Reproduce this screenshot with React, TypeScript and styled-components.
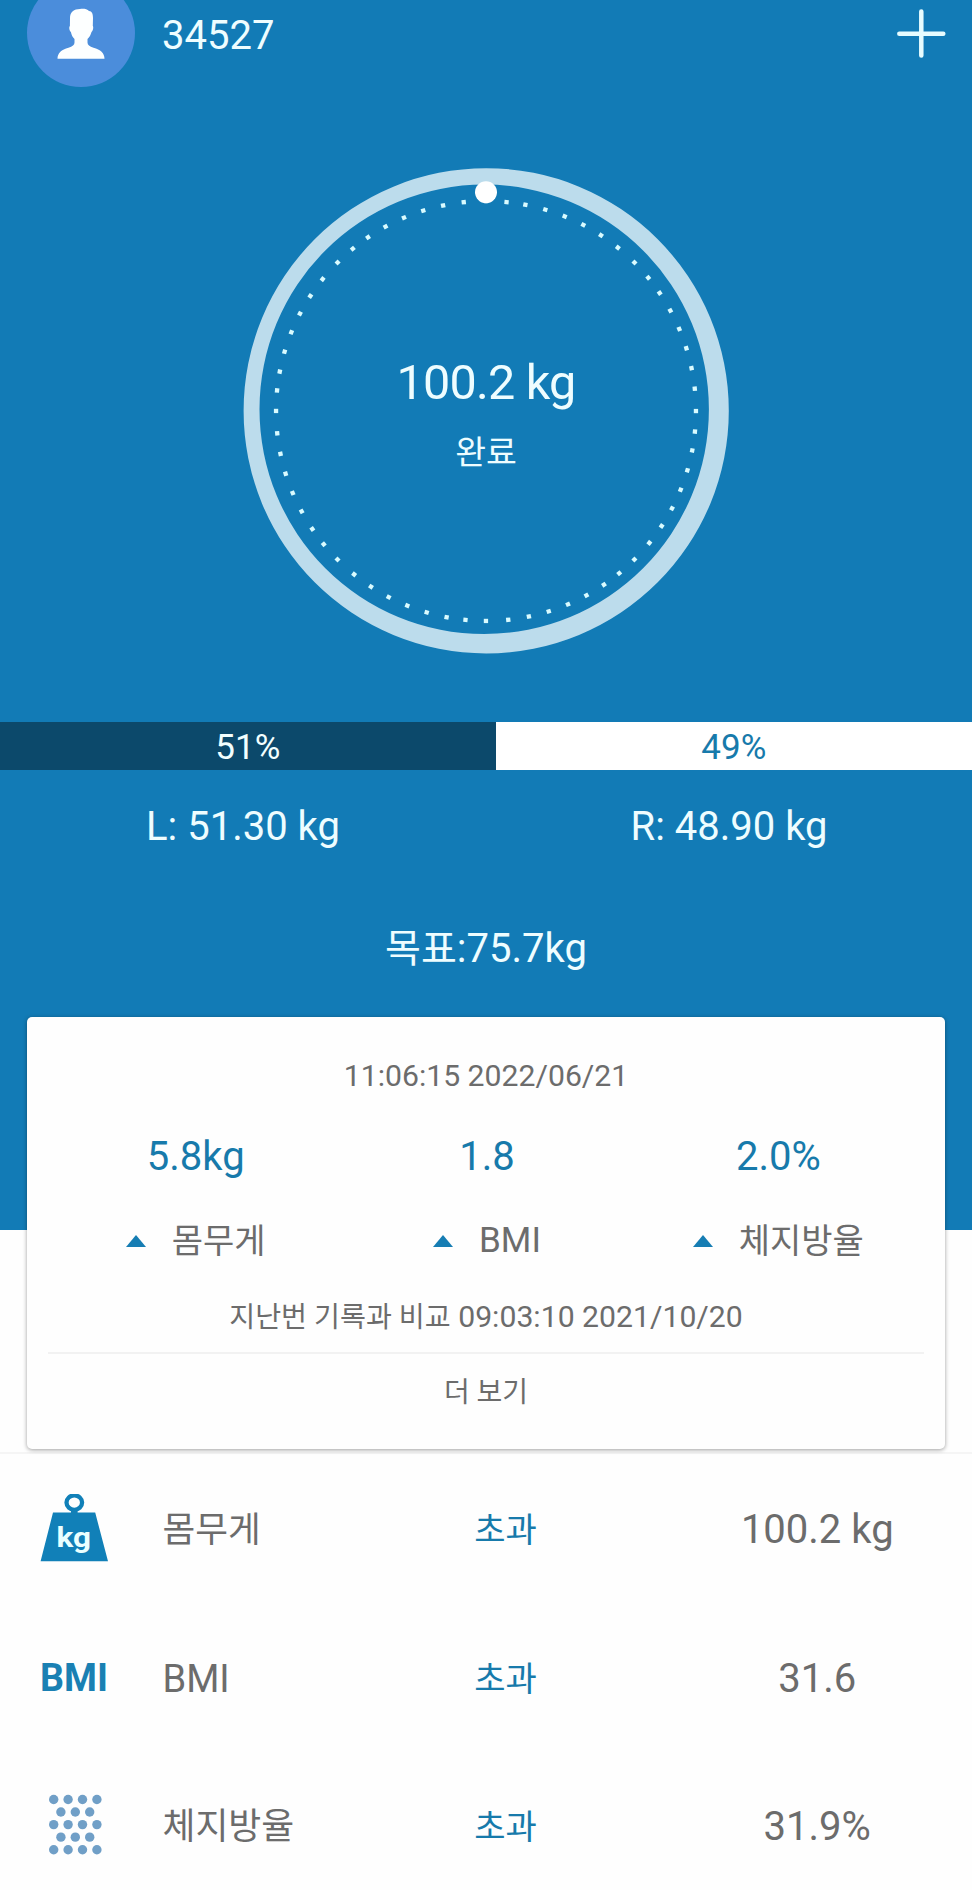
import React from "react";
import styled, { createGlobalStyle } from "styled-components";

const blue = "#127bb6";
const textBlue = "#177aab";
const grey = "#6c6c6c";

const GlobalStyle = createGlobalStyle`
  * { box-sizing: border-box; }
  body {
    margin: 0;
    background: #fefefe;
    font-family: Roboto, "Noto Sans CJK KR", sans-serif;
  }
`;

const Page = styled.main`
  width: 972px;
  height: 1890px;
  overflow: hidden;
`;

const Hero = styled.section`
  height: 1230px;
  background: ${blue};
  color: #eefdff;
  overflow: hidden;
`;

const Header = styled.header`
  display: flex;
  align-items: center;
  height: 108px;
  margin-top: -21px;
  padding: 0 26px 0 27px;
`;

const Avatar = styled.svg`
  width: 108px;
  height: 108px;
`;

const UserName = styled.span`
  flex: 1;
  padding: 6px 0 0 27px;
  font-size: 40px;
  line-height: 50px;
`;

const AddIcon = styled.svg`
  width: 50px;
  height: 50px;
`;

const Gauge = styled.div`
  display: grid;
  justify-content: center;
  margin-top: 81px;
  > * { grid-area: 1 / 1; }
`;

const Dial = styled.svg`
  width: 486px;
  height: 486px;
`;

const Readout = styled.div`
  display: flex;
  flex-direction: column;
  align-items: center;
  padding-top: 185px;
`;

const Weight = styled.span`
  font-size: 48.5px;
  letter-spacing: -0.8px;
  line-height: 60px;
`;

const State = styled.span`
  margin-top: 20px;
  font-size: 33.5px;
  line-height: 40px;
`;

const BalanceBar = styled.div`
  display: flex;
  height: 47.5px;
  margin-top: 68px;
  font-size: 35px;
  line-height: 52px;
  text-align: center;
`;

const BalanceSide = styled.div<{ $share: number; $dark?: boolean }>`
  flex: ${(p) => p.$share};
  background: ${(p) => (p.$dark ? "#0c496b" : "#fff")};
  color: ${(p) => (p.$dark ? "#f2ffff" : textBlue)};
`;

const Sides = styled.div`
  display: grid;
  grid-template-columns: 1fr 1fr;
  margin-top: 32px;
  font-size: 40px;
  line-height: 50px;
  text-align: center;
`;

const Goal = styled.div`
  margin-top: 72px;
  font-size: 40px;
  line-height: 50px;
  text-align: center;
`;

const Hangul = styled.span<{ $size: number }>`
  font-size: ${(p) => p.$size}px;
`;

const Card = styled.section`
  position: relative;
  height: 432px;
  margin: -213px 27px 0;
  padding: 39px 21px 0;
  border-radius: 5px;
  background: #fefefe;
  box-shadow: 0 1px 4px rgba(0, 0, 0, 0.38);
  color: ${grey};
  text-align: center;
`;

const Stamp = styled.div`
  font-size: 30.2px;
  line-height: 40px;
`;

const Changes = styled.div`
  display: grid;
  grid-template-columns: repeat(3, 1fr);
  margin-top: 36px;
  padding-left: 2px;
`;

const ChangeValue = styled.div`
  color: ${textBlue};
  font-size: 40px;
  line-height: 50px;
`;

const ChangeLabel = styled.div<{ $size: number }>`
  display: flex;
  align-items: center;
  justify-content: center;
  gap: 26px;
  margin-top: 34px;
  font-size: ${(p) => p.$size}px;
  line-height: 50px;
`;

const Triangle = styled.svg`
  width: 20px;
  height: 12px;
`;

const Compare = styled.div`
  margin-top: 31px;
  padding-bottom: 14px;
  border-bottom: 2px solid #f2f2f2;
  font-size: 30.2px;
  line-height: 40px;
  margin-bottom: 19px;
`;

const More = styled.div`
  font-size: 28px;
  line-height: 40px;
`;

const List = styled.section`
  margin-top: 3px;
  padding-top: 2px;
  border-top: 2px solid #f5f5f5;
`;

const Row = styled.div`
  display: grid;
  grid-template-columns: 122.5px 275px 136px 1fr;
  align-items: center;
  height: 148.5px;
  padding: 0 34px 0 40px;
  color: ${grey};
`;

const RowIcon = styled.svg`
  width: 70px;
  height: 70px;
  margin-top: -2px;
`;

const RowLabel = styled.span<{ $size: number }>`
  font-size: ${(p) => p.$size}px;
  line-height: 50px;
`;

const RowState = styled.span`
  color: ${textBlue};
  font-size: 34px;
  line-height: 50px;
  text-align: center;
`;

const RowValue = styled.span`
  padding-left: 123px;
  font-size: 40px;
  line-height: 50px;
  text-align: center;
`;

const tickSteps = [5.6, 10.8, 16.4, 22, 27.6, 33.2, 38.9, 45];
const ticks = Array.from({ length: 8 }, (_, octant) =>
  tickSteps.map((step) => octant * 45 + step),
).flat();

const ringPath =
  "M243.2 .2a242.6 242.6 0 1 1 0 485.2a242.6 242.6 0 1 1 0-485.2z" +
  "M241.2 16.6a224.7 224.7 0 1 0 0 449.4a224.7 224.7 0 1 0 0-449.4z";

const WeightIcon = () => (
  <RowIcon viewBox="0 0 70 70">
    <ellipse cx="34.3" cy="8.6" rx="7.8" ry="7.2" fill="none" stroke="#1180b8" strokeWidth="4.3" />
    <path d="M31 15h6.6v3.600h17.600L68 67.300H.6L13 18.600h18z" fill="#1180b8" />
    <text x="16.4" y="53" fill="#eaffff" fontFamily="Roboto, sans-serif" fontWeight="700" fontSize="28.5" textLength="34.5" lengthAdjust="spacingAndGlyphs">
      kg
    </text>
  </RowIcon>
);

const BmiIcon = () => (
  <RowIcon viewBox="0 0 70 70">
    <text x="0" y="47.5" fill="#1a80b3" fontFamily="Roboto, sans-serif" fontWeight="700" fontSize="38.5" textLength="68" lengthAdjust="spacingAndGlyphs">
      BMI
    </text>
  </RowIcon>
);

const FatIcon = () => (
  <RowIcon viewBox="0 0 70 70" fill="#709fc7">
    {[0, 1, 2, 3, 4].flatMap((row) =>
      Array.from({ length: row % 2 ? 3 : 4 }, (_, col) => (
        <circle
          key={`${row}-${col}`}
          cx={13.7 + col * 14.4 + (row % 2 ? 7.2 : 0)}
          cy={8.5 + row * 12.55}
          r="4.7"
        />
      )),
    )}
  </RowIcon>
);

const changes = [
  { value: "5.8kg", label: "몸무게", size: 34 },
  { value: "1.8", label: "BMI", size: 35 },
  { value: "2.0%", label: "체지방율", size: 34 },
];

const metrics = [
  { Icon: WeightIcon, label: "몸무게", size: 35.6, value: "100.2 kg" },
  { Icon: BmiIcon, label: "BMI", size: 38, value: "31.6" },
  { Icon: FatIcon, label: "체지방율", size: 35.8, value: "31.9%" },
];

export default function App() {
  return (
    <Page>
      <GlobalStyle />
      <Hero>
        <Header>
          <Avatar viewBox="27 -21 108 108">
            <circle cx="81" cy="33" r="54" fill="#4b8ddb" />
            <path
              d="M70 18c0-6 4-9 10-9c4-.4 7 0 9 2c3 0 4 3 4 7l-.2 8c1 1 .2 5-1.300 6c-.8 3-2 5-4 7v3.500c0 2.500 2 4 6 5.200c7 2 11 5.300 11 11H57.500c0-5.700 4-9 11-11c4-1.200 6-2.700 6-5.200v-3.500c-2-2-3-4-3.600-7c-1.500-1-2.200-5-1-6z"
              fill="#fdffff"
            />
          </Avatar>
          <UserName>34527</UserName>
          <AddIcon viewBox="0 0 50 50" stroke="#e6fcff" strokeWidth="4.5" strokeLinecap="round">
            <path d="M25.3 3.500v44M3.300 25.700h44" />
          </AddIcon>
        </Header>

        <Gauge>
          <Dial viewBox="0 0 486 486">
            <path d={ringPath} fill="#bcdcec" fillRule="evenodd" />
            {ticks.map((angle) => (
              <rect
                key={angle}
                x="240.9"
                y="30.9"
                width="4.3"
                height="4.3"
                fill="#d9fbff"
                transform={`rotate(${angle} 243 243)`}
              />
            ))}
            <circle cx="243" cy="24.3" r="11" fill="#fff" />
          </Dial>
          <Readout>
            <Weight>100.2 kg</Weight>
            <State>완료</State>
          </Readout>
        </Gauge>

        <BalanceBar>
          <BalanceSide $share={51} $dark>51%</BalanceSide>
          <BalanceSide $share={49}>49%</BalanceSide>
        </BalanceBar>
        <Sides>
          <span>L: 51.30 kg</span>
          <span>R: 48.90 kg</span>
        </Sides>
        <Goal>
          <Hangul $size={39}>목표</Hangul>:75.7kg
        </Goal>
      </Hero>

      <Card>
        <Stamp>11:06:15 2022/06/21</Stamp>
        <Changes>
          {changes.map((c) => (
            <div key={c.label}>
              <ChangeValue>{c.value}</ChangeValue>
              <ChangeLabel $size={c.size}>
                <Triangle viewBox="0 0 20 12">
                  <path d="M10 0l10 12H0z" fill="#167db3" />
                </Triangle>
                {c.label}
              </ChangeLabel>
            </div>
          ))}
        </Changes>
        <Compare>
          <Hangul $size={28.2}>지난번 기록과 비교</Hangul> 09:03:10 2021/10/20
        </Compare>
        <More>더 보기</More>
      </Card>

      <List>
        {metrics.map(({ Icon, label, size, value }) => (
          <Row key={label}>
            <Icon />
            <RowLabel $size={size}>{label}</RowLabel>
            <RowState>초과</RowState>
            <RowValue>{value}</RowValue>
          </Row>
        ))}
      </List>
    </Page>
  );
}
